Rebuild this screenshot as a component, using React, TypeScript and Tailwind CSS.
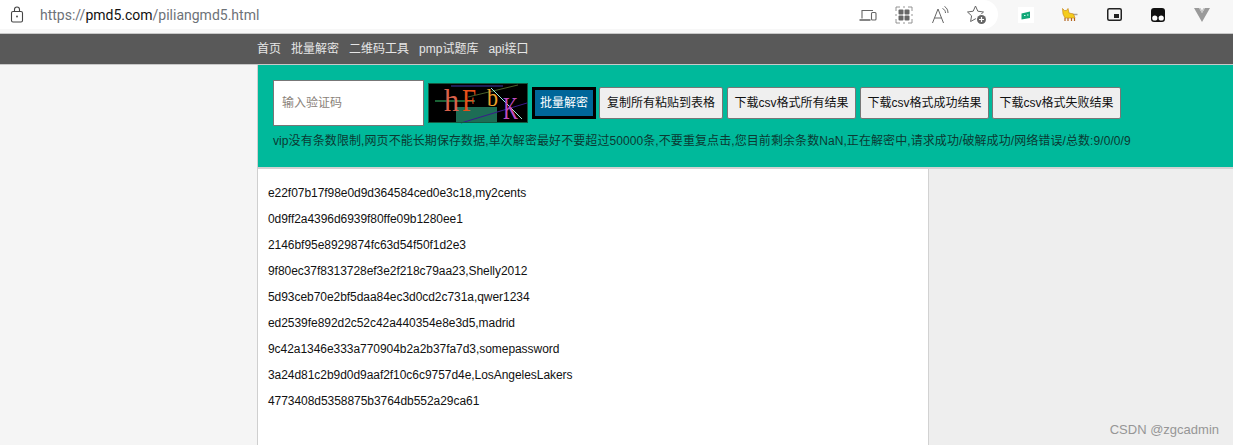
const font = { cjk: "font-['Liberation_Sans','Noto_Sans_CJK_SC',sans-serif]" };

const navItems = ['首页', '批量解密', '二维码工具', 'pmp试题库', 'api接口'];

const actionButtons = [
	{ label: '复制所有粘贴到表格', className: 'ml-[3px] w-[124px]' },
	{ label: '下载csv格式所有结果', className: 'ml-[4px] w-[129px]' },
	{ label: '下载csv格式成功结果', className: 'ml-[4px] w-[129px]' },
	{ label: '下载csv格式失败结果', className: 'ml-[3px] w-[129px]' },
];

const results = [
	'e22f07b17f98e0d9d364584ced0e3c18,my2cents',
	'0d9ff2a4396d6939f80ffe09b1280ee1',
	'2146bf95e8929874fc63d54f50f1d2e3',
	'9f80ec37f8313728ef3e2f218c79aa23,Shelly2012',
	'5d93ceb70e2bf5daa84ec3d0cd2c731a,qwer1234',
	'ed2539fe892d2c52c42a440354e8e3d5,madrid',
	'9c42a1346e333a770904b2a2b37fa7d3,somepassword',
	'3a24d81c2b9d0d9aaf2f10c6c9757d4e,LosAngelesLakers',
	'4773408d5358875b3764db552a29ca61',
];

const serif = 'Liberation Serif, serif';

const Captcha = () => (
	<svg width="100" height="40" viewBox="0 0 100 40" overflow="visible" className="block shrink-0 bg-black">
		<rect x="28" y="24" width="41" height="16" fill="#1d6d55" />
		<path d="M23 3h52" stroke="#3b3ba8" />
		<path d="M7 18h40" stroke="#35c46a" />
		<path d="M33 40 99 20" stroke="#3a1a8c" />
		<path d="M40 14 90 2" stroke="#48602a" />
		<path d="M63 5 94 36" stroke="#9ff0d8" />
		<text x="16" y="28" fontFamily={serif} fontSize="31" fill="#d9604a" textLength="15" lengthAdjust="spacingAndGlyphs">h</text>
		<text x="34" y="28" fontFamily={serif} fontSize="31" fill="#e8501a" textLength="14" lengthAdjust="spacingAndGlyphs">F</text>
		<text x="59" y="23" fontFamily={serif} fontSize="25" fill="#eba12a" textLength="11" lengthAdjust="spacingAndGlyphs">b</text>
		<text x="75" y="36" fontFamily={serif} fontSize="31" fill="#c04cc0" textLength="15" lengthAdjust="spacingAndGlyphs">K</text>
		<rect x="0.500" y="0.500" width="99" height="39" fill="none" stroke="#14583f" />
	</svg>
);

const BrowserBar = () => (
	<div className="flex h-[33px] bg-[#f7f7f7]">
		<div className="flex h-[29px] w-[998px] shrink-0 items-center rounded-r-[15px] bg-white pl-[10px]">
			<svg width="14" height="17" viewBox="0 0 14 17" fill="none" stroke="#444" strokeWidth="1.100" className="shrink-0">
				<rect x="1.500" y="5.500" width="11" height="10.500" rx="1.500" />
				<path d="M4.500 5.500V3.500a2.500 2.500 0 0 1 5 0v2" />
				<circle cx="7" cy="10.500" r="0.900" fill="#444" stroke="none" />
			</svg>
			<span className="ml-[16px] font-['Roboto',sans-serif] text-[14px] leading-none text-[#6d7278]">
				https://<span className="text-[#111]">pmd5.com</span>/piliangmd5.html
			</span>
			<div className="ml-auto mr-[11px] flex items-center gap-[17px] text-[#666]">
				<svg width="20" height="20" viewBox="0 0 20 20" fill="none" stroke="currentColor" strokeWidth="1.100">
					<path d="M4 13.500V5.500h11" />
					<path d="M1.500 15h11" strokeWidth="1.600" />
					<rect x="13.500" y="7.500" width="4.500" height="7.500" rx="1" />
				</svg>
				<svg width="18" height="18" viewBox="0 0 18 18" fill="none" stroke="#888">
					<path d="M1 5V1h4M8 1h2M13 1h4v4M17 8v2M17 13v4h-4M10 17H8M5 17H1v-4M1 10V8" strokeWidth="0.900" />
					<rect x="3.500" y="3.500" width="5" height="5" rx="1" fill="#666" stroke="none" />
					<rect x="9.500" y="3.500" width="5" height="5" rx="1" fill="#666" stroke="none" />
					<rect x="3.500" y="9.500" width="5" height="5" rx="1" fill="#666" stroke="none" />
					<rect x="9.500" y="9.500" width="5" height="5" rx="1" fill="#666" stroke="none" />
				</svg>
				<svg width="20" height="20" viewBox="0 0 20 20" fill="none" stroke="currentColor" strokeWidth="1">
					<path d="M2.500 18 8 4l5.500 14M4.500 13h7" />
					<path d="M12.500 3.500c1.800.8 3 2.300 3 4.500M14.500 1.500c2.300 1.300 3.500 3.500 3.500 6.500" />
				</svg>
				<svg width="20" height="20" viewBox="0 0 20 20" fill="none" stroke="currentColor" strokeWidth="1">
					<path d="M8.500 1 10.800 6.200 16.500 7 12.400 10.800 13.400 16.500 8.500 13.800 3.600 16.500 4.600 10.800 0.500 7 6.200 6.200Z" strokeLinejoin="round" />
					<circle cx="14.500" cy="14.500" r="5.500" fill="#fff" stroke="none" />
					<circle cx="14.500" cy="14.500" r="4.500" fill="#666" stroke="none" />
					<path d="M14.500 12v5M12 14.500h5" stroke="#fff" strokeWidth="1.200" />
				</svg>
			</div>
		</div>
		<div className="flex h-[29px] flex-1 items-center pl-[20px]">
			<svg width="16" height="16" viewBox="0 0 16 16" className="shrink-0 bg-white">
				<path d="M3.500 6.500 12 4.500v6.500L3.500 12.500Z" fill="#10a777" />
				<path d="M6 8.500h1.500M9 8h1.500" stroke="#cfe" />
			</svg>
			<svg width="16" height="14" viewBox="0 0 16 14" className="ml-[28px] shrink-0">
				<path d="M15.500 6.500H10" stroke="#a9a39a" strokeWidth="1.500" />
				<path d="M0.500 0.500 2.500 2.500H4.500L6 0.500 7 5 11.500 6 13 10H3L1 6Z" fill="#f4cc1c" stroke="#c98a20" strokeWidth="0.700" />
				<path d="M3 10v3M6 10v3M9.500 10v3M12.500 10v3" stroke="#b5651d" strokeWidth="1.200" />
			</svg>
			<svg width="15" height="13" viewBox="0 0 15 13" fill="none" className="ml-[29px] shrink-0">
				<rect x="0.750" y="0.750" width="13.500" height="11.500" rx="1.500" stroke="#222" strokeWidth="1.500" />
				<rect x="7" y="6" width="5" height="4" fill="#222" />
			</svg>
			<svg width="14" height="14" viewBox="0 0 14 14" className="ml-[29px] shrink-0">
				<rect width="14" height="14" rx="3" fill="#111" />
				<circle cx="3.800" cy="10" r="2.600" fill="#fff" />
				<circle cx="10.200" cy="10" r="2.600" fill="#fff" />
			</svg>
			<svg width="16" height="14" viewBox="0 0 16 14" className="ml-[29px] shrink-0">
				<path d="M0 0h5l3 5 3-5h5L8 14Z" fill="#9a9a9a" />
				<path d="M5 0l3 5 3-5h-1.500L8 2.500 6.500 0Z" fill="#c4c4c4" />
			</svg>
		</div>
	</div>
);

export default function App() {
	return (
		<div className={`relative h-[445px] w-[1233px] overflow-hidden bg-[#f5f5f5] text-[12px] ${font.cjk}`}>
			<BrowserBar />
			<nav className="flex h-[32px] items-center gap-[10px] border-y border-y-[#c8c8c8] bg-[#595959] pl-[257px] text-[#e6e6e6]">
				{navItems.map((item) => (
					<a key={item}>{item}</a>
				))}
			</nav>
			<div className="ml-[257px] h-[380px] border-l border-l-[#cfcfcf] bg-[#eeeeee]">
				<div className="flex h-[104px] flex-col border-b-2 border-b-[#d2d2d2] bg-[#00b99b] pl-[15px] pt-[15px]">
					<div className="flex items-center">
						<input
							placeholder="输入验证码"
							className="h-[46px] w-[151px] border border-[#777] bg-white pl-[8px] text-[12px] placeholder:text-[#8a8279]"
						/>
						<div className="ml-[4px]">
							<Captcha />
						</div>
						<button className="ml-[4px] h-[32px] w-[64px] border-[3px] border-black bg-[#006699] text-white">批量解密</button>
						{actionButtons.map((item) => (
							<button key={item.label} className={`${item.className} h-[32px] rounded-[2px] border border-[#777] bg-[#efefef] text-[#111]`}>
								{item.label}
							</button>
						))}
					</div>
					<p className="mt-[6px] leading-[18px] tracking-[0.08px] text-[#0b3a33]">
						vip没有条数限制,网页不能长期保存数据,单次解密最好不要超过50000条,不要重复点击,您目前剩余条数NaN,正在解密中,请求成功/破解成功/网络错误/总数:9/0/0/9
					</p>
				</div>
				<div className="h-[276px] w-[671px] border-r border-r-[#d2d2d2] bg-white pl-[10px] pt-[11px] tracking-[-0.05px] text-[#111]">
					{results.map((line) => (
						<p key={line} className="h-[26px] leading-[26px]">
							{line}
						</p>
					))}
				</div>
			</div>
			<div className="absolute bottom-[9px] right-[14px] text-[13px] leading-none text-[#969696]">CSDN @zgcadmin</div>
		</div>
	);
}
